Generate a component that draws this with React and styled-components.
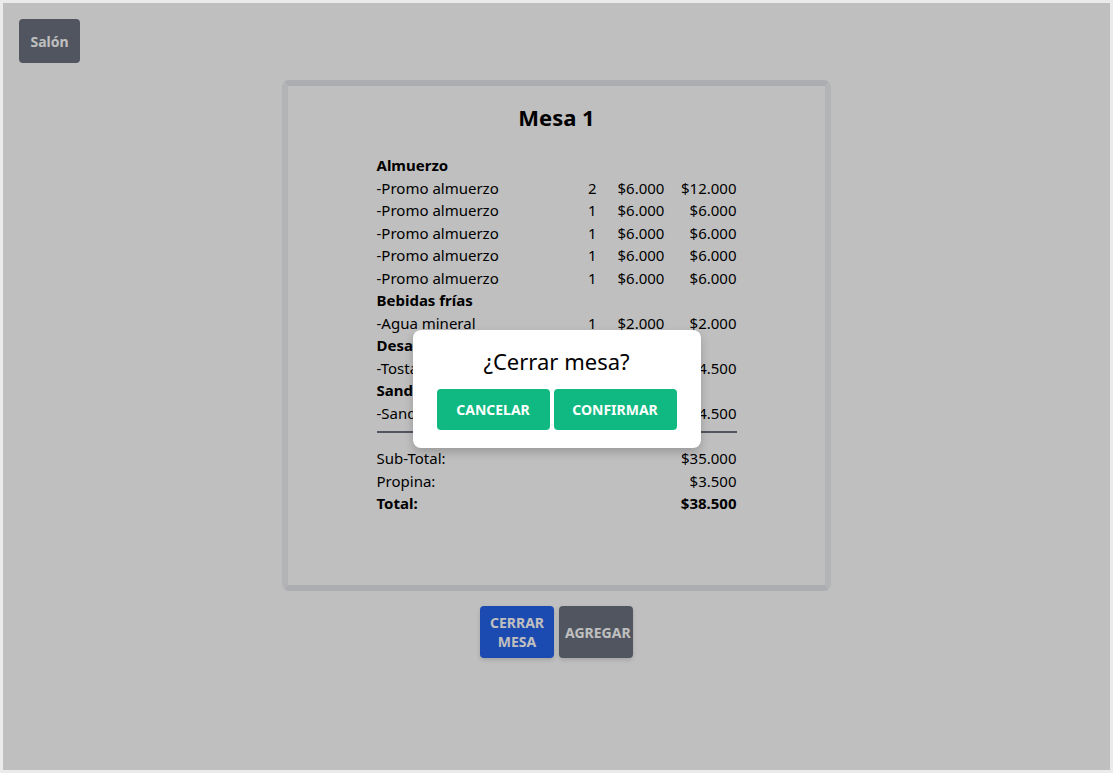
import styled, { createGlobalStyle } from "styled-components";

const GlobalStyle = createGlobalStyle`
  html, body {
    margin: 0;
    padding: 0;
    background: #ebebeb;
    font-family: "Segoe UI", "Noto Sans", "Liberation Sans", sans-serif;
    color: #000;
  }
  * { box-sizing: border-box; }
`;

const items = [
  { category: "Almuerzo", rows: [
    ["-Promo almuerzo", 2, "$6.000", "$12.000"],
    ["-Promo almuerzo", 1, "$6.000", "$6.000"],
    ["-Promo almuerzo", 1, "$6.000", "$6.000"],
    ["-Promo almuerzo", 1, "$6.000", "$6.000"],
    ["-Promo almuerzo", 1, "$6.000", "$6.000"],
  ] },
  { category: "Bebidas frías", rows: [["-Agua mineral", 1, "$2.000", "$2.000"]] },
  { category: "Desayuno", rows: [["-Tostadas", 1, "$4.500", "$4.500"]] },
  { category: "Sandwich", rows: [["-Sandwich", 1, "$4.500", "$4.500"]] },
];

export default function App() {
  return (
    <>
      <GlobalStyle />
      <Frame>
        <Page>
          <Header>
            <DarkButton>Salón</DarkButton>
          </Header>
          <Main>
            <Ticket>
              <Title>Mesa 1</Title>
              <List>
                {items.map((group) => (
                  <Group key={group.category}>
                    <Category>{group.category}</Category>
                    {group.rows.map((r, i) => (
                      <Row key={i}>
                        <span>{r[0]}</span>
                        <Qty>{r[1]}</Qty>
                        <Price>{r[2]}</Price>
                        <Amount>{r[3]}</Amount>
                      </Row>
                    ))}
                  </Group>
                ))}
                <Divider />
                <TotalRow>
                  <span>Sub-Total:</span>
                  <span>$35.000</span>
                </TotalRow>
                <TotalRow>
                  <span>Propina:</span>
                  <span>$3.500</span>
                </TotalRow>
                <TotalRow $bold>
                  <span>Total:</span>
                  <span>$38.500</span>
                </TotalRow>
              </List>
            </Ticket>
            <Actions>
              <ActionButton $color="#2563eb">CERRAR<br />MESA</ActionButton>
              <ActionButton $color="#6b7280">AGREGAR</ActionButton>
            </Actions>
          </Main>
        </Page>
        <Overlay>
          <Modal>
            <ModalTitle>¿Cerrar mesa?</ModalTitle>
            <ModalButtons>
              <GreenButton $w={113}>CANCELAR</GreenButton>
              <GreenButton $w={123}>CONFIRMAR</GreenButton>
            </ModalButtons>
          </Modal>
        </Overlay>
      </Frame>
    </>
  );
}

/* ---------------- styled-components ---------------- */
const Frame = styled.div`
  position: relative;
  width: 1113px;
  height: 773px;
  padding: 3px 3px 3px 3px;
`;

const Page = styled.div`
  width: 100%;
  height: 100%;
  background: #ffffff;
  padding: 16px;
`;

const Header = styled.div`
  display: flex;
  height: 44px;
`;

const DarkButton = styled.button`
  width: 61px;
  height: 44px;
  padding: 0;
  border: none;
  border-radius: 4px;
  background: #6b7280;
  color: #ffffff;
  font-family: inherit;
  font-size: 14px;
  font-weight: 700;
`;

const Main = styled.div`
  display: flex;
  flex-direction: column;
  align-items: center;
  padding-top: 17px;
`;

const Ticket = styled.div`
  width: 549px;
  height: 511px;
  border: 6px solid #eef0f3;
  border-top-color: #e5e7eb;
  border-bottom-color: #e5e7eb;
  border-radius: 7px;
  background: #ffffff;
  padding-top: 15px;
  display: flex;
  flex-direction: column;
  align-items: center;
`;

const Title = styled.h1`
  margin: 0 0 21px;
  font-size: 22px;
  font-weight: 700;
  line-height: 32px;
`;

const List = styled.div`
  width: 360px;
  font-size: 15px;
  line-height: 22.5px;
`;

const Group = styled.div``;

const Category = styled.div`
  font-weight: 700;
`;

const Row = styled.div`
  display: grid;
  grid-template-columns: 1fr 30px 82px 58px;
`;

const Qty = styled.span`
  text-align: right;
`;

const Price = styled.span`
  padding-left: 21px;
`;

const Amount = styled.span`
  text-align: right;
`;

const Divider = styled.div`
  margin: 7px 0 14px;
  border-top: 2px solid #6b7280;
`;

const TotalRow = styled.div`
  display: flex;
  justify-content: space-between;
  font-weight: ${({ $bold }) => ($bold ? 700 : 400)};
`;

const Actions = styled.div`
  display: flex;
  gap: 5px;
  margin-top: 15px;
`;

const ActionButton = styled.button`
  width: 74px;
  height: 52px;
  border: none;
  border-radius: 4px;
  background: ${({ $color }) => $color};
  color: #ffffff;
  font-family: inherit;
  font-size: 14px;
  font-weight: 700;
  line-height: 19px;
  box-shadow: 0 2px 4px rgba(0, 0, 0, 0.15);
`;

const Overlay = styled.div`
  position: absolute;
  inset: 3px;
  background: rgba(0, 0, 0, 0.25);
  display: flex;
  align-items: center;
  justify-content: center;
`;

const Modal = styled.div`
  width: 288px;
  background: #ffffff;
  border-radius: 8px;
  box-shadow: 0 4px 10px rgba(0, 0, 0, 0.2);
  padding: 16px 0 18px;
  display: flex;
  flex-direction: column;
  align-items: center;
  gap: 13px;
  transform: translateY(2px);
`;

const ModalTitle = styled.div`
  font-size: 22px;
  line-height: 30px;
`;

const ModalButtons = styled.div`
  display: flex;
  gap: 4px;
`;

const GreenButton = styled.button`
  width: ${({ $w }) => $w}px;
  height: 41px;
  padding: 0;
  border: none;
  border-radius: 4px;
  background: #10b981;
  color: #ffffff;
  font-family: inherit;
  font-size: 14px;
  font-weight: 700;
`;
